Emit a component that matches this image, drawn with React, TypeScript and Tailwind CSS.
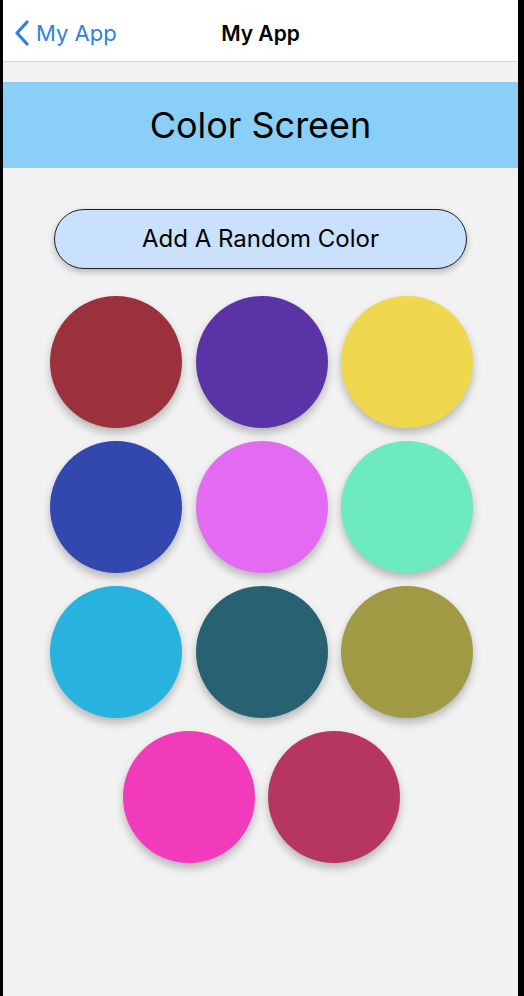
import React from 'react';

const colors = [
    '#9a313d',
    '#5a33a6',
    '#efd84e',
    '#3248ae',
    '#e36bf2',
    '#6deac2',
    '#28b2de',
    '#286272',
    '#a09a45',
    '#f23bbb',
    '#b73563',
];

const App: React.FC = () => {
    return (
        <div className="flex h-[996px] w-[524px] overflow-hidden bg-black pl-[3px] pr-[6px] font-['Inter',sans-serif]">
            <div className="flex flex-1 flex-col bg-[#f2f2f2]">
                <div className="relative flex h-[62px] shrink-0 items-center border-b border-[#d6d6d6] bg-white pt-[4px]">
                    <button className="flex items-center gap-[6px] pl-[11px] text-[#2f80e0]">
                        <svg width="16" height="26" viewBox="0 0 16 26" fill="none">
                            <path d="M13 2L3 13l10 11" stroke="currentColor" strokeWidth="3.2" strokeLinecap="round" strokeLinejoin="round" />
                        </svg>
                        <span className="text-[22px] leading-none">My App</span>
                    </button>
                    <h1 className="absolute left-1/2 top-[23px] -translate-x-1/2 text-[21px] leading-none font-semibold text-black">My App</h1>
                </div>

                <div className="mt-[20px] flex h-[86px] shrink-0 items-center justify-center bg-[#8acff7]">
                    <h2 className="text-[36px] text-black">Color Screen</h2>
                </div>

                <div className="flex shrink-0 justify-center pt-[41px]">
                    <button className="h-[60px] w-[413px] rounded-full border-[1.5px] border-[#1f2228] bg-[#c9e1fc] text-[24px] text-black shadow-[0_3px_6px_rgba(0,0,0,0.25)]">
                        Add A Random Color
                    </button>
                </div>

                <div className="mx-auto mt-[27px] flex w-[439px] shrink-0 flex-wrap justify-center gap-y-[13px] pl-[2px]">
                    {colors.map((c, i) => (
                        <div key={i} className="mx-[6.75px] h-[132px] w-[132px] rounded-full shadow-[0_5px_8px_rgba(0,0,0,0.25)]" style={{ backgroundColor: c }} />
                    ))}
                </div>
            </div>
        </div>
    );
};

export default App;
